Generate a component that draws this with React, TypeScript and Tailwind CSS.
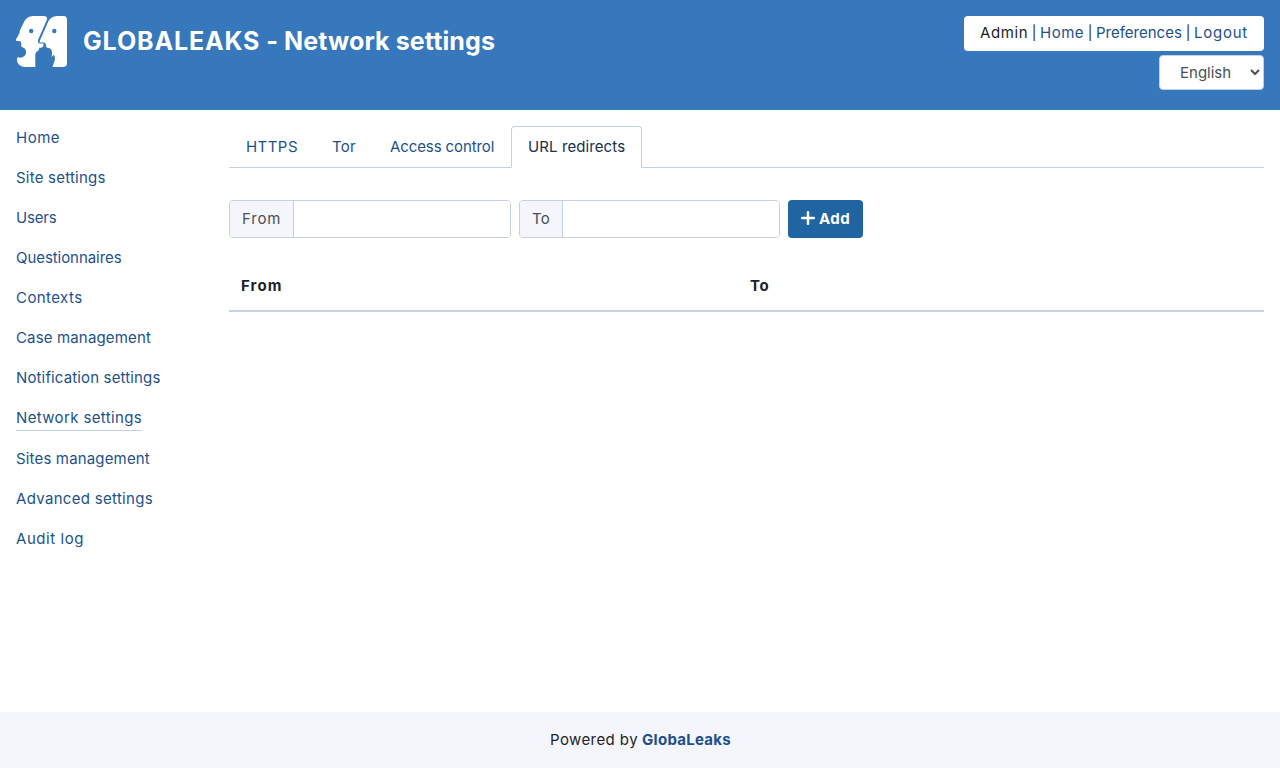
import type { ReactNode } from "react";

const navItems = [
  { label: "Home", tracking: "tracking-[0.5px]" },
  { label: "Site settings", tracking: "tracking-[0.22px]" },
  { label: "Users", tracking: "tracking-[-0.18px]" },
  { label: "Questionnaires", tracking: "tracking-[-0.06px]" },
  { label: "Contexts", tracking: "tracking-[0.42px]" },
  { label: "Case management", tracking: "tracking-[0.15px]" },
  { label: "Notification settings", tracking: "tracking-[0.14px]" },
  { label: "Network settings", tracking: "tracking-[0.36px]", active: true },
  { label: "Sites management", tracking: "tracking-[0.16px]" },
  { label: "Advanced settings", tracking: "tracking-[0.31px]" },
  { label: "Audit log", tracking: "tracking-[0.56px]" },
];

const tabs = [
  { label: "HTTPS", style: "w-[86px] tracking-[0.45px]" },
  { label: "Tor", style: "w-[58px] tracking-[0.28px]" },
  { label: "Access control", style: "w-[138px] tracking-[-0.1px]" },
  { label: "URL redirects", style: "w-[131px] tracking-[0.1px]", active: true },
];

function Logo() {
  return (
    <svg width="51" height="51" viewBox="0 0 51 51" className="block shrink-0">
      <path
        fill="#fff"
        d="M17 0H28.500Q31.800 .5 30.800 4L22.200 23.500Q21 27.300 24 27.500H27.500Q28 31.500 24.500 31.800H23.200Q23.300 34.500 21.500 35.300Q19.300 36 19.300 38.500V51H9Q2.500 50.300 1.200 45.500Q.7 42.500 1.800 41Q4 42.200 6.500 41.300Q10.500 39.500 10 35.500Q9.700 32.300 6.500 31.300Q4.700 30.700 5.200 29.300L5.500 28L4.800 26.700L5.300 25.500L0 24.800Q-.4 24.300 .2 23L3.500 17.200Q3.300 15.500 4.200 13.700L8.500 5Q11 .3 17 0Z"
      />
      <path
        fill="#fff"
        d="M41 0H47.500Q51 .2 51 4V47Q51 51 47 51H36.500L38.800 44Q39.400 40.500 37.800 38.800L35.700 41Q36.700 36.500 35.300 33.500Q34 31.600 30.800 31.700Q29.700 30.500 30 28.500Q29.600 26.500 27.500 26.500H23.800Q23.300 26 24 24.300L32.500 5Q35 .4 41 0Z"
      />
      <circle cx="15.200" cy="15" r="2.200" fill="#3777bc" />
      <circle cx="38.300" cy="15" r="2.200" fill="#3777bc" />
    </svg>
  );
}

function Separator() {
  return <span className="w-3 text-center text-[14px]">|</span>;
}

function Field({ label, addon, width }: { label: ReactNode; addon: string; width: string }) {
  return (
    <label className={`flex h-[38px] overflow-hidden rounded border border-[#c5d0e2] ${width}`}>
      <span className={`flex shrink-0 items-center border-r border-[#c5d0e2] bg-[#f5f6fb] pl-3 text-[#495057] ${addon}`}>
        {label}
      </span>
      <input type="text" className="min-w-0 flex-1 bg-white px-3 outline-none" />
    </label>
  );
}

export default function App() {
  return (
    <div className="flex h-screen flex-col overflow-hidden bg-white font-['Inter',sans-serif] text-[15px] leading-6 text-[#1d1f2a]">
      <header className="flex h-[110px] shrink-0 items-start justify-between bg-[#3777bc] p-4">
        <div className="flex gap-4">
          <Logo />
          <h1 className="pt-[9px] text-[25px] leading-8 font-bold tracking-[0.1px] whitespace-nowrap text-white">
            <span className="tracking-[0.85px]">GLOBALEAKS</span> - Network settings
          </h1>
        </div>
        <div className="flex flex-col items-end gap-1">
          <div className="flex h-[35px] w-[300px] items-center rounded bg-white px-4 pb-[2px] whitespace-nowrap">
            <span className="w-12 tracking-[0.6px]">Admin</span>
            <Separator />
            <a className="w-11 tracking-[0.5px] text-[#1d5189]">Home</a>
            <Separator />
            <a className="w-[86px] text-[#1d5189]">Preferences</a>
            <Separator />
            <a className="w-[54px] tracking-[0.76px] text-[#1d5189]">Logout</a>
          </div>
          <div className="flex h-[35px] w-[105px] items-center justify-between rounded border border-[#c5d0e2] bg-white pr-[3px] pl-5 text-[#495057]">
            <span>English</span>
            <svg width="10" height="7" viewBox="0 0 10 7" fill="none" stroke="#495057" strokeWidth="2">
              <path d="M1 1l4 4 4-4" />
            </svg>
          </div>
        </div>
      </header>

      <div className="flex min-h-0 flex-1 px-4 pt-4">
        <nav className="flex w-[213px] shrink-0 flex-col items-start gap-4 text-[#1d5189]">
          {navItems.map((item) => (
            <a
              key={item.label}
              className={`block whitespace-nowrap ${item.tracking} ${
                item.active ? "h-[25px] border-b border-[#c5d0e2]" : "h-6"
              }`}
            >
              {item.label}
            </a>
          ))}
        </nav>

        <main className="min-w-0 flex-1">
          <div className="flex h-[42px] border-b border-[#c5d0e2]">
            {tabs.map((tab) => (
              <a
                key={tab.label}
                className={`box-border h-[42px] shrink-0 rounded-t border px-4 pt-2 whitespace-nowrap ${tab.style} ${
                  tab.active
                    ? "border-[#c5d0e2] border-b-white bg-white text-[#14304f]"
                    : "border-transparent text-[#1d5189]"
                }`}
              >
                {tab.label}
              </a>
            ))}
          </div>

          <div className="mt-8 flex gap-2">
            <Field label="From" addon="w-16 tracking-[0.8px]" width="w-[282px]" />
            <Field label="To" addon="w-[43px] tracking-[0.25px]" width="w-[261px]" />
            <button className="flex h-[38px] w-[75px] items-center rounded bg-[#2065a2] pl-[13px] font-bold tracking-[0.41px] text-white">
              <svg width="14" height="14" viewBox="0 0 14 14" className="mr-1 mb-[2px] shrink-0">
                <path d="M7 1.200V12.800M1.200 7H12.800" stroke="#fff" strokeWidth="2.500" strokeLinecap="round" />
              </svg>
              Add
            </button>
          </div>

          <table className="mt-6 w-full table-fixed border-collapse text-left font-bold">
            <thead>
              <tr className="h-[49px] border-b-2 border-[#c5d0e2]">
                <th className="w-[509px] px-3 tracking-[1.1px]">From</th>
                <th className="px-3 tracking-[0.6px]">To</th>
              </tr>
            </thead>
          </table>
        </main>
      </div>

      <footer className="flex h-14 shrink-0 items-center justify-center gap-1 bg-[#f5f6fb] pl-px">
        <span className="tracking-[0.42px]">Powered by</span>
        <a className="font-bold tracking-[0.28px] text-[#1d5189]">GlobaLeaks</a>
      </footer>
    </div>
  );
}
